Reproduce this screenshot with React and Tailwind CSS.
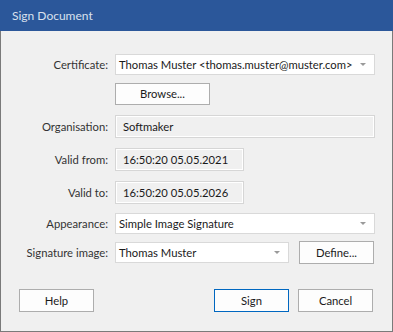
import React from "react";

const font = { fontFamily: 'Lato, "Noto Sans", sans-serif' };

function Arrow() {
  return (
    <svg width="6" height="3" viewBox="0 0 6 3" className="shrink-0">
      <path d="M0 0h6L3 3z" fill="#9a9a9a" />
    </svg>
  );
}

function Label({ children }) {
  return (
    <div className="w-[108px] shrink-0 text-right pr-px text-[#333333]">{children}</div>
  );
}

function Combo({ value, className = "" }) {
  return (
    <div
      className={`flex items-center justify-between bg-white border border-[#d9d9d9] pl-[3px] pr-[8px] text-[#1a1a1a] ${className}`}
    >
      <span className="whitespace-nowrap">{value}</span>
      <Arrow />
    </div>
  );
}

function ReadOnly({ value, className = "" }) {
  return (
    <div
      className={`flex items-center bg-[#f0f0f0] border border-[#d6d6d6] shadow-[inset_1px_1px_0_#ffffff,inset_-1px_-1px_0_#ffffff] pl-[7px] text-[#1a1a1a] ${className}`}
    >
      {value}
    </div>
  );
}

function Button({ children, className = "", primary = false }) {
  return (
    <div
      className={`flex items-center justify-center bg-[#fdfdfd] border text-[#1a1a1a] ${
        primary ? "border-[#0067c0]" : "border-[#adadad]"
      } ${className}`}
    >
      {children}
    </div>
  );
}

export default function App() {
  return (
    <div className="w-[393px] h-[332px] bg-[#f0f0f0] text-[11.25px] leading-none flex flex-col" style={font}>
      <div className="h-[31px] shrink-0 bg-[#2b579a] flex items-center pl-[12px] text-[12px] text-[#d9e1ee]">
        Sign Document
      </div>
      <div className="flex-1 border-x border-b border-[#7a7a7a] flex flex-col">
        <div className="mt-[23px] flex items-center gap-[6px]">
          <Label>Certificate:</Label>
          <Combo value="Thomas Muster <thomas.muster@muster.com>" className="w-[260px] h-[21px]" />
        </div>
        <div className="mt-[8px] flex items-center gap-[6px]">
          <div className="w-[108px] shrink-0" />
          <Button className="w-[95px] h-[22px]">Browse...</Button>
        </div>
        <div className="mt-[10px] flex items-center gap-[6px]">
          <Label>Organisation:</Label>
          <ReadOnly value="Softmaker" className="w-[260px] h-[23px]" />
        </div>
        <div className="mt-[10px] flex items-center gap-[6px]">
          <Label>Valid from:</Label>
          <ReadOnly value="16:50:20 05.05.2021" className="w-[129px] h-[23px]" />
        </div>
        <div className="mt-[10px] flex items-center gap-[6px]">
          <Label>Valid to:</Label>
          <ReadOnly value="16:50:20 05.05.2026" className="w-[129px] h-[23px]" />
        </div>
        <div className="mt-[9px] flex items-center gap-[6px]">
          <Label>Appearance:</Label>
          <Combo value="Simple Image Signature" className="w-[260px] h-[21px]" />
        </div>
        <div className="mt-[7px] flex items-center gap-[6px]">
          <Label>Signature image:</Label>
          <Combo value="Thomas Muster" className="w-[174px] h-[21px]" />
          <Button className="ml-[4px] w-[75px] h-[23px]">Define...</Button>
        </div>
        <div className="mt-[25px] flex items-center pl-[18px]">
          <Button className="w-[75px] h-[23px]">Help</Button>
          <Button primary className="ml-[120px] w-[75px] h-[23px]">Sign</Button>
          <Button className="ml-[9px] w-[75px] h-[23px]">Cancel</Button>
        </div>
      </div>
    </div>
  );
}
